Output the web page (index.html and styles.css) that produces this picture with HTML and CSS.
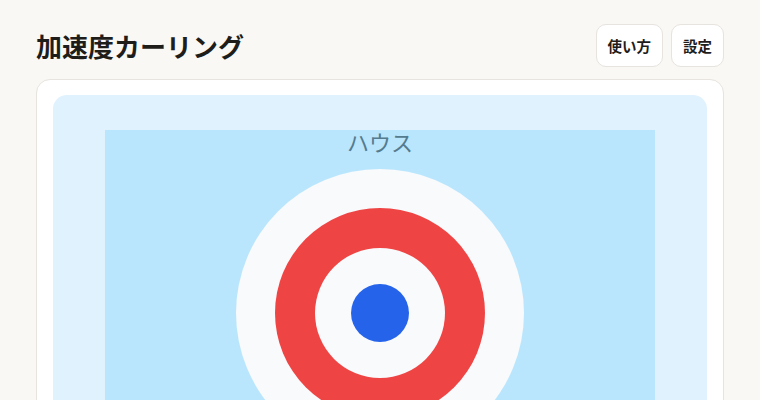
FILE: index.html
```html
<!DOCTYPE html>
<html lang="ja">

<head>
  <meta charset="UTF-8">
  <meta name="viewport" content="width=device-width, initial-scale=1.0">
  <title>加速度カーリング</title>
  <link rel="stylesheet" href="styles.css">
</head>

<body>
  <div class="app">
    <div class="header">
      <h1 class="title">加速度カーリング</h1>
      <div class="actions">
        <button class="btn">使い方</button>
        <button class="btn">設定</button>
      </div>
    </div>
    <div class="card">
      <div class="rink">
        <div class="sheet">
          <div class="house-label">ハウス</div>
          <div class="ring ring-outer">
            <div class="ring ring-red">
              <div class="ring ring-inner">
                <div class="button-dot"></div>
              </div>
            </div>
          </div>
        </div>
      </div>
    </div>
  </div>
</body>

</html>
```

FILE: styles.css
```css
body {
  margin: 0;
  background-color: #faf8f5;
  font-family: "Noto Sans CJK JP", "Noto Sans", sans-serif;
  color: #1f1d1a;
  height: 100vh;
  overflow: hidden;
}

.app {
  padding: 24px 36px 0;
}

.header {
  display: flex;
  justify-content: space-between;
  align-items: center;
  margin-bottom: 12px;
}

.title {
  margin: 0;
  font-size: 26px;
  font-weight: 700;
  line-height: 42px;
}

.actions {
  display: flex;
  gap: 8px;
}

.btn {
  height: 43px;
  padding: 0 11px;
  background-color: #fff;
  border: 1px solid #e7e3de;
  border-radius: 10px;
  font-family: inherit;
  font-size: 14.5px;
  font-weight: 700;
  color: #1f1d1a;
  cursor: pointer;
}

.card {
  background-color: #fff;
  border: 1px solid #e7e3de;
  border-radius: 14px;
  padding: 15px 16px;
}

.rink {
  background-color: #e0f2fe;
  border-radius: 14px;
  padding: 35px 52px 0;
  height: 400px;
}

.sheet {
  background-color: #bae6fd;
  display: flex;
  flex-direction: column;
  align-items: center;
  height: 400px;
}

.house-label {
  font-size: 22px;
  line-height: 24px;
  color: #557b8e;
  margin-top: -1px;
}

.ring {
  border-radius: 50%;
  display: flex;
  justify-content: center;
  align-items: center;
}

.ring-outer {
  margin-top: 16px;
  width: 288px;
  height: 288px;
  background-color: #f8fafc;
}

.ring-red {
  width: 210px;
  height: 210px;
  background-color: #ef4444;
}

.ring-inner {
  width: 130px;
  height: 130px;
  background-color: #f8fafc;
}

.button-dot {
  width: 58px;
  height: 58px;
  border-radius: 50%;
  background-color: #2563eb;
}
```
